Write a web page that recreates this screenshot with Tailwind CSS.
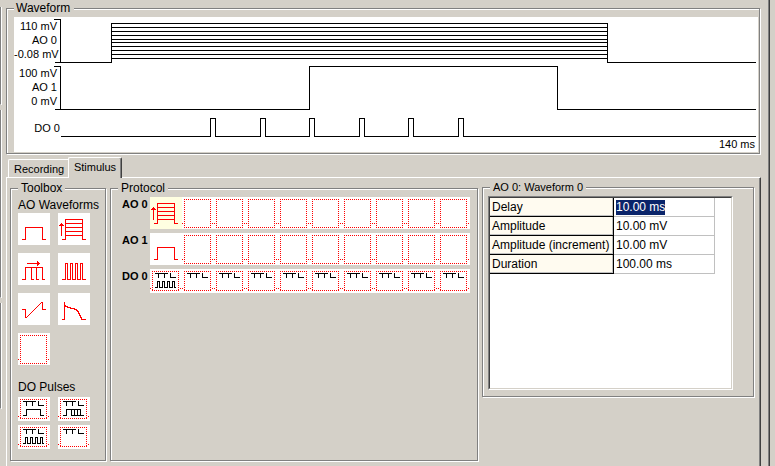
<!DOCTYPE html>
<html lang="en">
<head>
<meta charset="utf-8">
<title>Waveform stimulus editor</title>
<script src="https://cdn.jsdelivr.net/npm/@tailwindcss/browser@4"></script>
</head>
<body class="flex h-screen overflow-hidden bg-[#d4d0c8] font-['Liberation_Sans',Arial,sans-serif] text-[11px] leading-[14px] text-black">

<!-- Shared icon shapes -->
<svg class="hidden" aria-hidden="true">
  <defs>
    <symbol id="pulse" viewBox="0 0 32 32"><path d="M4 26.5H7.5V14.5H24.5V26.5H28" fill="none" stroke="#f00"/></symbol>
    <symbol id="steps" viewBox="0 0 32 32">
      <path d="M4 26.5H7.5V6.5H24.5V26.5H28M7 10.5H24M7 14.5H24M7 18.5H24M7 22.5H24M3.5 10V23M1 12.5H6M2 11.5H5" fill="none" stroke="#f00"/>
    </symbol>
    <symbol id="widths" viewBox="0 0 32 32">
      <path d="M4 26.5H7.5V14.5H24.5V26.5H27M13.5 14V26.5H16M18.5 14V26.5H21M9 10.5H22M19.5 8V13M20.5 9V12" fill="none" stroke="#f00"/>
    </symbol>
    <symbol id="train" viewBox="0 0 32 32"><path d="M4 26.5H7.5V10.5H9.5V26.5H12.5V10.5H14.5V26.5H17.5V10.5H19.5V26.5H22.5V10.5H24.5V26.5H28" fill="none" stroke="#f00"/></symbol>
    <symbol id="ramp" viewBox="0 0 32 32"><path d="M4 16.5H7.5V24.5H8.5L23.5 9.5H24.5V16.5H28" fill="none" stroke="#f00"/></symbol>
    <symbol id="decay" viewBox="0 0 32 32"><path d="M4 26.5H6.5V9V12.5H7.5V13.5H9.5V14.5H12.5V15.5H16.5V16.5H18.5V17.5H19.5V18.5H20.5V20.5H21.5V22.5H22.5V24.5H23.5V26.5H28" fill="none" stroke="#f00"/></symbol>
    <symbol id="empty" viewBox="0 0 32 32"><path d="M2 2.5H29M2 30.5H29M2.5 2V31M28.5 2V31M0 26.5H1M30 26.5H31" fill="none" stroke="#f00" stroke-dasharray="1 1"/></symbol>
    <symbol id="ttl" viewBox="0 0 32 24">
      <path d="M2 2.5H29M2 21.5H29M2.5 2V21M28.5 2V21M0 19.5H1M30 19.5H31" fill="none" stroke="#f00" stroke-dasharray="1 1"/>
      <path d="M5 4.5H18M8.5 4V9M14.5 4V9M20.5 4V8.5H26" fill="none" stroke="#000"/>
    </symbol>
    <symbol id="ttl-pulse" viewBox="0 0 32 24"><use href="#ttl"/><path d="M5 18.5H8.5V12.5H22.5V18.5H26" fill="none" stroke="#000"/></symbol>
    <symbol id="ttl-widths" viewBox="0 0 32 24"><use href="#ttl"/><path d="M5 18.5H8.5V12.5H22.5V18.5M13.5 12V18.5H26M16.5 12V18M19.5 12V18" fill="none" stroke="#000"/></symbol>
    <symbol id="ttl-train" viewBox="0 0 32 24"><use href="#ttl"/><path d="M5 18.5H7.5V12.5H9.5V18.5H12.5V12.5H14.5V18.5H17.5V12.5H19.5V18.5H22.5V12.5H24.5V18.5H26" fill="none" stroke="#000"/></symbol>
  </defs>
</svg>

<!-- Edges of the neighbouring panels -->
<div class="flex w-[6px] shrink-0 flex-col gap-[5px] pt-[7px]">
  <div class="h-[98px] w-[2px] border-r border-b border-l border-white border-l-[#808080]"></div>
  <div class="h-[188px] w-[2px] border-r border-b border-l border-white border-l-[#808080]"></div>
  <div class="h-[106px] w-[2px] border-r border-b border-l border-white border-l-[#808080]"></div>
</div>

<main class="flex min-w-0 flex-1 flex-col border-r border-[#404040] pr-[8px] shadow-[inset_-1px_0_0_#808080]">

  <fieldset class="mr-px min-w-0 border border-[#808080] pt-px pr-px pb-px pl-[7px] shadow-[1px_1px_0_#fff,inset_1px_1px_0_#fff]">
    <legend class="bg-[#d4d0c8] pr-1 pl-[2px] text-xs leading-4">Waveform</legend>
    <div class="grid bg-white">
      <svg class="col-start-1 row-start-1 h-[135px] w-full" viewBox="0 0 744 135" preserveAspectRatio="none" shape-rendering="crispEdges" fill="none" stroke="#000" role="img" aria-label="Output traces">
        <path d="M40 2.5H46.5V45.5M41 45.5H97.5V6.5H593.5V45.5H742M97 10.5H593M97 14.5H593M97 18.5H593M97 22.5H593M97 25.5H593M97 29.5H593M97 33.5H593M97 37.5H593M97 41.5H593"/>
        <path d="M40 49.5H46.5V92.5M41 92.5H295.5V49.5H543.5V92.5H742"/>
        <path d="M47 119.5H196.5V101.5H201.5V119.5H246.5V101.5H251.5V119.5H295.5V101.5H300.5V119.5H345.5V101.5H350.5V119.5H394.5V101.5H399.5V119.5H444.5V101.5H449.5V119.5H742"/>
      </svg>
      <div class="col-start-1 row-start-1 flex justify-between pt-[2px] pr-[3px] pb-px">
        <div class="w-[46px] text-right whitespace-nowrap">
          <div class="pr-[3px]">
            <p>110 mV</p><p>AO 0</p><p>-0.08 mV</p>
          </div>
          <div class="pt-[5px] pr-[3px]">
            <p>100 mV</p><p>AO 1</p><p>0 mV</p>
          </div>
          <p class="pt-[13px]">DO 0</p>
        </div>
        <p class="self-end">140 ms</p>
      </div>
    </div>
  </fieldset>

  <div role="tablist" class="mt-[3px] flex h-5 shrink-0 items-end pl-[2px]">
    <button role="tab" aria-selected="false" class="h-[18px] w-[60px] rounded-tl-[2px] border-t border-l border-white pl-[5px] text-left">Recording</button>
    <button role="tab" aria-selected="true" class="relative -mb-px h-[21px] w-[54px] rounded-t-[2px] border-t border-r border-l border-white border-r-[#404040] bg-[#d4d0c8] pb-[2px] shadow-[inset_-1px_0_0_#808080]">Stimulus</button>
  </div>

  <section role="tabpanel" aria-label="Stimulus" class="flex min-h-0 flex-1 items-start gap-1 border-t border-r border-l border-white border-r-[#404040] pt-[2px] pr-[6px] pl-[3px] shadow-[inset_-1px_0_0_#808080]">

    <fieldset class="h-[281px] w-24 shrink-0 border border-[#808080] pl-[7px] shadow-[1px_1px_0_#fff,inset_1px_1px_0_#fff]">
      <legend class="bg-[#d4d0c8] px-[3px] text-xs leading-4">Toolbox</legend>
      <h2 class="pt-px text-xs leading-4 whitespace-nowrap">AO Waveforms</h2>
      <div class="grid w-[72px] grid-cols-2 gap-2">
        <button class="size-8 bg-white" aria-label="Pulse"><svg class="size-8" shape-rendering="crispEdges"><use href="#pulse"/></svg></button>
        <button class="size-8 bg-white" aria-label="Incrementing amplitude"><svg class="size-8" shape-rendering="crispEdges"><use href="#steps"/></svg></button>
        <button class="size-8 bg-white" aria-label="Incrementing width"><svg class="size-8" shape-rendering="crispEdges"><use href="#widths"/></svg></button>
        <button class="size-8 bg-white" aria-label="Pulse train"><svg class="size-8" shape-rendering="crispEdges"><use href="#train"/></svg></button>
        <button class="size-8 bg-white" aria-label="Ramp"><svg class="size-8" shape-rendering="crispEdges"><use href="#ramp"/></svg></button>
        <button class="size-8 bg-white" aria-label="Custom waveform"><svg class="size-8" shape-rendering="crispEdges"><use href="#decay"/></svg></button>
        <button class="size-8 bg-white" aria-label="Empty"><svg class="size-8" shape-rendering="crispEdges"><use href="#empty"/></svg></button>
      </div>
      <h2 class="mt-[14px] mb-[2px] text-xs leading-4">DO Pulses</h2>
      <div class="grid w-[72px] grid-cols-2 gap-x-2 gap-y-1">
        <button class="h-6 w-8 bg-white" aria-label="TTL pulse"><svg class="h-6 w-8" shape-rendering="crispEdges"><use href="#ttl-pulse"/></svg></button>
        <button class="h-6 w-8 bg-white" aria-label="TTL incrementing width"><svg class="h-6 w-8" shape-rendering="crispEdges"><use href="#ttl-widths"/></svg></button>
        <button class="h-6 w-8 bg-white" aria-label="TTL pulse train"><svg class="h-6 w-8" shape-rendering="crispEdges"><use href="#ttl-train"/></svg></button>
        <button class="h-6 w-8 bg-white" aria-label="TTL empty"><svg class="h-6 w-8" shape-rendering="crispEdges"><use href="#ttl"/></svg></button>
      </div>
    </fieldset>

    <fieldset class="h-[281px] min-w-0 flex-1 border border-[#808080] pl-[7px] shadow-[1px_1px_0_#fff,inset_1px_1px_0_#fff]">
      <legend class="bg-[#d4d0c8] px-[3px] text-xs leading-4">Protocol</legend>
      <div class="flex flex-col gap-1 pt-px font-bold">
        <div class="flex"><h3 class="w-8 shrink-0 pl-1 whitespace-nowrap">AO 0</h3><div class="flex" data-first="steps" data-rest="empty" data-selected></div></div>
        <div class="flex"><h3 class="w-8 shrink-0 pl-1 whitespace-nowrap">AO 1</h3><div class="flex" data-first="pulse" data-rest="empty"></div></div>
        <div class="flex"><h3 class="w-8 shrink-0 pl-1 whitespace-nowrap">DO 0</h3><div class="flex" data-first="ttl-train" data-rest="ttl"></div></div>
      </div>
    </fieldset>

    <fieldset class="w-[272px] shrink-0 border border-[#808080] pb-[6px] pl-[5px] shadow-[1px_1px_0_#fff,inset_1px_1px_0_#fff]">
      <legend class="ml-[2px] bg-[#d4d0c8] px-[3px]">AO 0: Waveform 0</legend>
      <div class="mt-[2px] h-[194px] w-[245px] border border-[#808080] border-r-white border-b-white">
        <div class="h-full border border-[#404040] border-r-[#d4d0c8] border-b-[#d4d0c8] bg-white">
          <table class="w-[225px] table-fixed border-separate border-spacing-0 text-xs leading-[18px]">
            <tbody>
              <tr>
                <th scope="row" class="h-[19px] w-[124px] border-r border-b border-black bg-[#fffbf0] p-0 pl-[2px] text-left font-normal whitespace-nowrap shadow-[inset_-1px_-1px_0_#c0c0c0]"><label for="delay">Delay</label></th>
                <td class="h-[19px] border-r border-b border-[#c0c0c0] p-0 pl-[2px]"><input id="delay" value="10.00 ms" class="block h-[15px] field-sizing-content bg-[#0a246a] p-0 leading-[15px] text-white outline-none"></td>
              </tr>
              <tr>
                <th scope="row" class="h-[19px] border-r border-b border-black bg-[#fffbf0] p-0 pl-[2px] text-left font-normal whitespace-nowrap shadow-[inset_-1px_-1px_0_#c0c0c0]"><label for="amplitude">Amplitude</label></th>
                <td class="h-[19px] border-r border-b border-[#c0c0c0] p-0 pl-[2px]"><input id="amplitude" value="10.00 mV" class="block h-[15px] w-24 p-0 leading-[15px] outline-none"></td>
              </tr>
              <tr>
                <th scope="row" class="h-[19px] border-r border-b border-black bg-[#fffbf0] p-0 pl-[2px] text-left font-normal whitespace-nowrap shadow-[inset_-1px_-1px_0_#c0c0c0]"><label for="increment">Amplitude (increment)</label></th>
                <td class="h-[19px] border-r border-b border-[#c0c0c0] p-0 pl-[2px]"><input id="increment" value="10.00 mV" class="block h-[15px] w-24 p-0 leading-[15px] outline-none"></td>
              </tr>
              <tr>
                <th scope="row" class="h-[19px] border-r border-b border-black bg-[#fffbf0] p-0 pl-[2px] text-left font-normal whitespace-nowrap shadow-[inset_-1px_-1px_0_#c0c0c0]"><label for="duration">Duration</label></th>
                <td class="h-[19px] border-r border-b border-[#c0c0c0] p-0 pl-[2px]"><input id="duration" value="100.00 ms" class="block h-[15px] w-24 p-0 leading-[15px] outline-none"></td>
              </tr>
            </tbody>
          </table>
        </div>
      </div>
    </fieldset>
  </section>
</main>
<div class="w-[5px] shrink-0"></div>

<script>
  // Fill each protocol row with its ten slots.
  document.querySelectorAll('[data-first]').forEach(function (row) {
    for (let i = 0; i < 10; i++) {
      const name = i === 0 ? row.dataset.first : row.dataset.rest;
      const size = name.startsWith('ttl') ? 'h-6 w-8' : 'size-8';
      const fill = i === 0 && 'selected' in row.dataset ? 'bg-[#ffffe1]' : 'bg-white';
      row.insertAdjacentHTML('beforeend',
        '<button class="' + size + ' ' + fill + '" aria-label="Slot ' + (i + 1) + '"><svg class="' + size +
        '" shape-rendering="crispEdges"><use href="#' + name + '"/></svg></button>');
    }
  });
</script>
</body>
</html>
